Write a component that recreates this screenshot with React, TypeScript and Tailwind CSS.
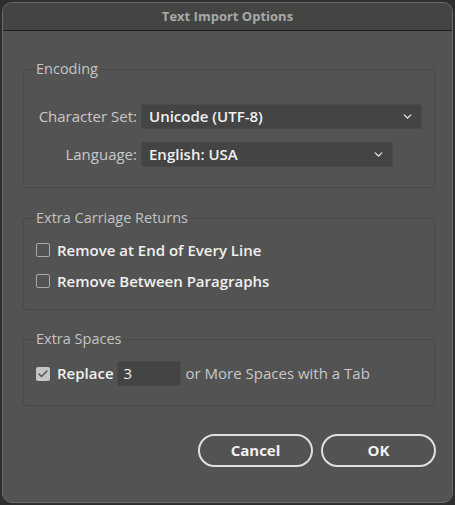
import { ChevronDown, Check } from 'lucide-react';

const font = { fontFamily: '"Open Sans", "Liberation Sans", sans-serif' };

function Group({ title, children, className }: { title: string; children: React.ReactNode; className?: string }) {
  return (
    <fieldset className={`ml-[20px] mr-[17px] rounded-[3px] border border-[#494949] px-[12px] ${className ?? ''}`}>
      <legend className="-ml-[1px] px-[1px] text-[14.5px] leading-[18px] text-[#c4c4c4]">{title}</legend>
      {children}
    </fieldset>
  );
}

function Select({ value, width }: { value: string; width: string }) {
  return (
    <div className={`flex h-[25px] items-center justify-between rounded-[2px] border border-[#4a4a4a] bg-[#444444] pl-[7px] pr-[7px] ${width}`}>
      <span className="text-[15px] font-semibold text-[#f0f0f0]">{value}</span>
      <ChevronDown size={13} strokeWidth={2.5} className="text-[#e6e6e6]" />
    </div>
  );
}

function Box({ checked }: { checked?: boolean }) {
  if (checked) {
    return (
      <span className="flex h-[14px] w-[14px] shrink-0 items-center justify-center rounded-[2px] bg-[#c6c6c6]">
        <Check size={12} strokeWidth={3} className="text-[#535353]" />
      </span>
    );
  }
  return <span className="h-[14px] w-[14px] shrink-0 rounded-[2px] border border-[#aaaaaa]" />;
}

export default function App() {
  return (
    <div className="h-[505px] w-[455px] bg-[#2e2e2e] p-[2px]" style={font}>
      <div className="flex h-[501px] flex-col overflow-hidden rounded-[10px] border border-[#6a6a6a] bg-[#535353]">
        <div className="flex h-[28px] shrink-0 items-center justify-center border-b border-[#1e1e1e] bg-[#434543]">
          <span className="text-[13px] font-bold text-[#a9a9a9]">Text Import Options</span>
        </div>

        <Group title="Encoding" className="mt-[29px] h-[128px]">
          <div className="mt-[26px] flex items-center">
            <span className="-ml-[1px] w-[102px] whitespace-nowrap text-right text-[15px] text-[#c8c8c8]">Character Set:</span>
            <div className="ml-[4px]">
              <Select value="Unicode (UTF-8)" width="w-[281px]" />
            </div>
          </div>
          <div className="mt-[13px] flex items-center">
            <span className="-ml-[1px] w-[102px] whitespace-nowrap text-right text-[15px] text-[#c8c8c8]">Language:</span>
            <div className="ml-[4px]">
              <Select value="English: USA" width="w-[252px]" />
            </div>
          </div>
        </Group>

        <Group title="Extra Carriage Returns" className="mt-[21px] h-[101px]">
          <div className="mt-[12px] flex items-center gap-[7px]">
            <Box />
            <span className="text-[15px] font-semibold text-[#f0f0f0]">Remove at End of Every Line</span>
          </div>
          <div className="mt-[8px] flex items-center gap-[7px]">
            <Box />
            <span className="text-[15px] font-semibold text-[#f0f0f0]">Remove Between Paragraphs</span>
          </div>
        </Group>

        <Group title="Extra Spaces" className="mt-[20px] h-[76px]">
          <div className="mt-[13px] flex items-center">
            <Box checked />
            <span className="ml-[7px] text-[15px] font-semibold text-[#f0f0f0]">Replace</span>
            <div className="ml-[3px] flex h-[25px] w-[64px] items-center rounded-[2px] border border-[#4a4a4a] bg-[#444444] pl-[6px] text-[15px] text-[#f0f0f0]">
              3
            </div>
            <span className="ml-[5px] text-[15px] text-[#c8c8c8]">or More Spaces with a Tab</span>
          </div>
        </Group>

        <div className="mr-[16px] mt-[28px] flex justify-end gap-[8px]">
          <button className="h-[33px] w-[115px] rounded-full border-2 border-[#e0e0e0] text-[15px] font-bold text-[#f0f0f0]">
            Cancel
          </button>
          <button className="h-[33px] w-[115px] rounded-full border-2 border-[#e0e0e0] text-[15px] font-bold text-[#f0f0f0]">
            OK
          </button>
        </div>
      </div>
    </div>
  );
}
